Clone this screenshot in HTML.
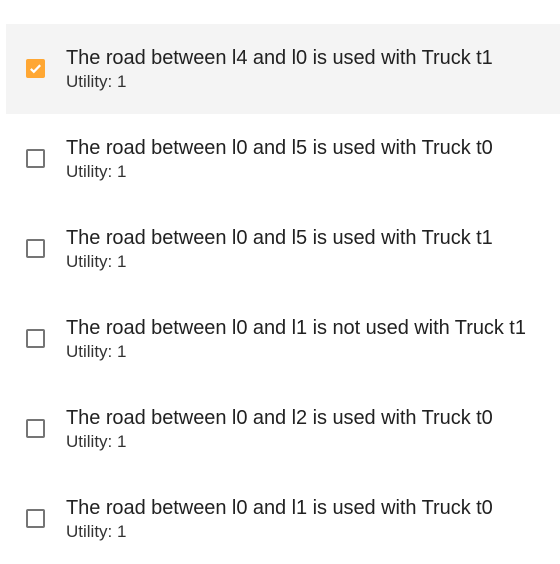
<!DOCTYPE html>
<html><head><style>
body{margin:0;width:560px;height:564px;background:#fff;font-family:"Liberation Sans",sans-serif;overflow:hidden}
.row{position:absolute;left:6px;width:554px;height:90px}
.hl{background:#f4f4f4}
.cb{position:absolute;left:20px;top:35px;width:15px;height:15px;border:2.5px solid #757575;border-radius:2px}
.cb.on{background:#ffa733;border-color:#ffa733}
.t{position:absolute;left:60px;top:23px;font-size:20px;color:#212121;white-space:nowrap;letter-spacing:-0.05px}
.s{position:absolute;left:60px;top:48px;font-size:17px;color:#333;white-space:nowrap}
</style></head><body>
<div class="row hl" style="top:24px"><div class="cb on"><svg width="15" height="15" viewBox="0 0 16 16"><path d="M3 8.5l3.2 3L13 4.5" stroke="#fff" stroke-width="2.4" fill="none"/></svg></div><div class="t">The road between l4 and l0 is used with Truck t1</div><div class="s">Utility: 1</div></div>
<div class="row" style="top:114px"><div class="cb"></div><div class="t">The road between l0 and l5 is used with Truck t0</div><div class="s">Utility: 1</div></div>
<div class="row" style="top:204px"><div class="cb"></div><div class="t">The road between l0 and l5 is used with Truck t1</div><div class="s">Utility: 1</div></div>
<div class="row" style="top:294px"><div class="cb"></div><div class="t">The road between l0 and l1 is not used with Truck t1</div><div class="s">Utility: 1</div></div>
<div class="row" style="top:384px"><div class="cb"></div><div class="t">The road between l0 and l2 is used with Truck t0</div><div class="s">Utility: 1</div></div>
<div class="row" style="top:474px"><div class="cb"></div><div class="t">The road between l0 and l1 is used with Truck t0</div><div class="s">Utility: 1</div></div>
</body></html>
